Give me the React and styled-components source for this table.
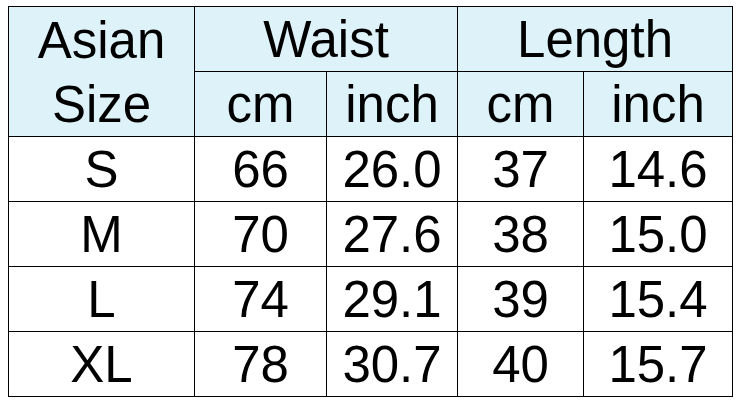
import React from "react";
import styled, { createGlobalStyle } from "styled-components";

const Global = createGlobalStyle`
  html, body { margin: 0; padding: 0; background: #ffffff; }
  body { padding: 6px 0 0 8px; font-family: "Liberation Sans", Arial, sans-serif; }
`;

const Table = styled.table`
  border-collapse: collapse;
  table-layout: fixed;
  width: 725px;
  color: #000;
  font-family: "Liberation Sans", Arial, sans-serif;
`;

const Cell = styled.td`
  border: 1.5px solid #000;
  height: 64px;
  padding: 0;
  text-align: center;
  vertical-align: middle;
  font-size: 51px;
  font-weight: 400;
  line-height: 1;
  background: ${(p) => (p.$head ? "#ddf2f9" : "#ffffff")};
`;

const Stack = styled.div`
  display: flex;
  flex-direction: column;
  gap: 13px;
  line-height: 1;
  padding-top: 2px;
`;

const cols = [186, 132, 131, 126, 149];

const rows = [
  ["S", "66", "26.0", "37", "14.6"],
  ["M", "70", "27.6", "38", "15.0"],
  ["L", "74", "29.1", "39", "15.4"],
  ["XL", "78", "30.7", "40", "15.7"],
];

export default function App() {
  return (
    <>
      <Global />
      <Table>
        <colgroup>
          {cols.map((w, i) => (
            <col key={i} style={{ width: w }} />
          ))}
        </colgroup>
        <thead>
          <tr>
            <Cell as="th" $head rowSpan={2}>
              <Stack>
                <span>Asian</span>
                <span>Size</span>
              </Stack>
            </Cell>
            <Cell as="th" $head colSpan={2}>Waist</Cell>
            <Cell as="th" $head colSpan={2}>Length</Cell>
          </tr>
          <tr>
            <Cell $head>cm</Cell>
            <Cell $head>inch</Cell>
            <Cell $head>cm</Cell>
            <Cell $head>inch</Cell>
          </tr>
        </thead>
        <tbody>
          {rows.map((r) => (
            <tr key={r[0]}>
              {r.map((v, i) => (
                <Cell key={i}>{v}</Cell>
              ))}
            </tr>
          ))}
        </tbody>
      </Table>
    </>
  );
}
